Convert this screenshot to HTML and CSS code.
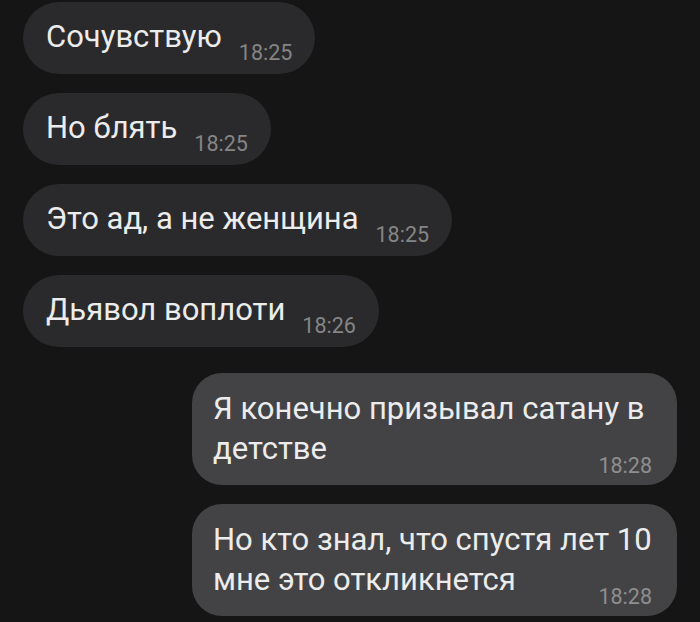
FILE: index.html
```html
<html lang="ru">
<head>
    <meta charset="UTF-8">
    <meta name="viewport" content="width=device-width, initial-scale=1.0">
    <title>Чат</title>
    <link rel="stylesheet" href="styles.css">
</head>
<body>
    <!-- Chat -->
    <div class="chat">
        <div class="msg msg-in">
            <span class="msg-text">Сочувствую</span>
            <span class="msg-time">18:25</span>
        </div>
        <div class="msg msg-in">
            <span class="msg-text">Но блять</span>
            <span class="msg-time">18:25</span>
        </div>
        <div class="msg msg-in">
            <span class="msg-text">Это ад, а не женщина</span>
            <span class="msg-time">18:25</span>
        </div>
        <div class="msg msg-in">
            <span class="msg-text">Дьявол воплоти</span>
            <span class="msg-time">18:26</span>
        </div>
        <div class="msg msg-out msg-first-out">
            <div class="msg-text">Я конечно призывал сатану в детстве</div>
            <div class="msg-time">18:28</div>
        </div>
        <div class="msg msg-out">
            <div class="msg-text">Но кто знал, что спустя лет 10 мне это откликнется</div>
            <div class="msg-time">18:28</div>
        </div>
    </div>
</body>
</html>
```

FILE: styles.css
```css
/* Global Styling */
body {
    margin: 0;
    background-color: #151515;
    font-family: Roboto, "Noto Sans", sans-serif;
    color: #ececec;
}
/* Chat Column */
.chat {
    display: flex;
    flex-direction: column;
    align-items: flex-start;
    gap: 19px;
    padding: 2px 23px 0 23px;
}
/* Bubbles */
.msg {
    box-sizing: border-box;
}
.msg-text {
    font-size: 31px;
    line-height: 40px;
}
.msg-time {
    font-size: 21.5px;
    line-height: 24px;
    color: #858585;
}
/* Incoming */
.msg-in {
    display: flex;
    align-items: flex-end;
    background-color: #2a2a2c;
    border-radius: 36px;
    padding: 15px 23px 9px 23px;
}
.msg-in .msg-text {
    padding-bottom: 8px;
}
.msg-in .msg-time {
    margin-left: 17px;
}
/* Outgoing */
.msg-out {
    align-self: flex-end;
    max-width: 485px;
    background-color: #434345;
    border-radius: 30px;
    padding: 16px 25px 7px 21px;
}
.msg-first-out {
    margin-top: 7px;
}
.msg-out .msg-time {
    text-align: right;
    margin-top: -15px;
    color: #8e8e8e;
}
```
